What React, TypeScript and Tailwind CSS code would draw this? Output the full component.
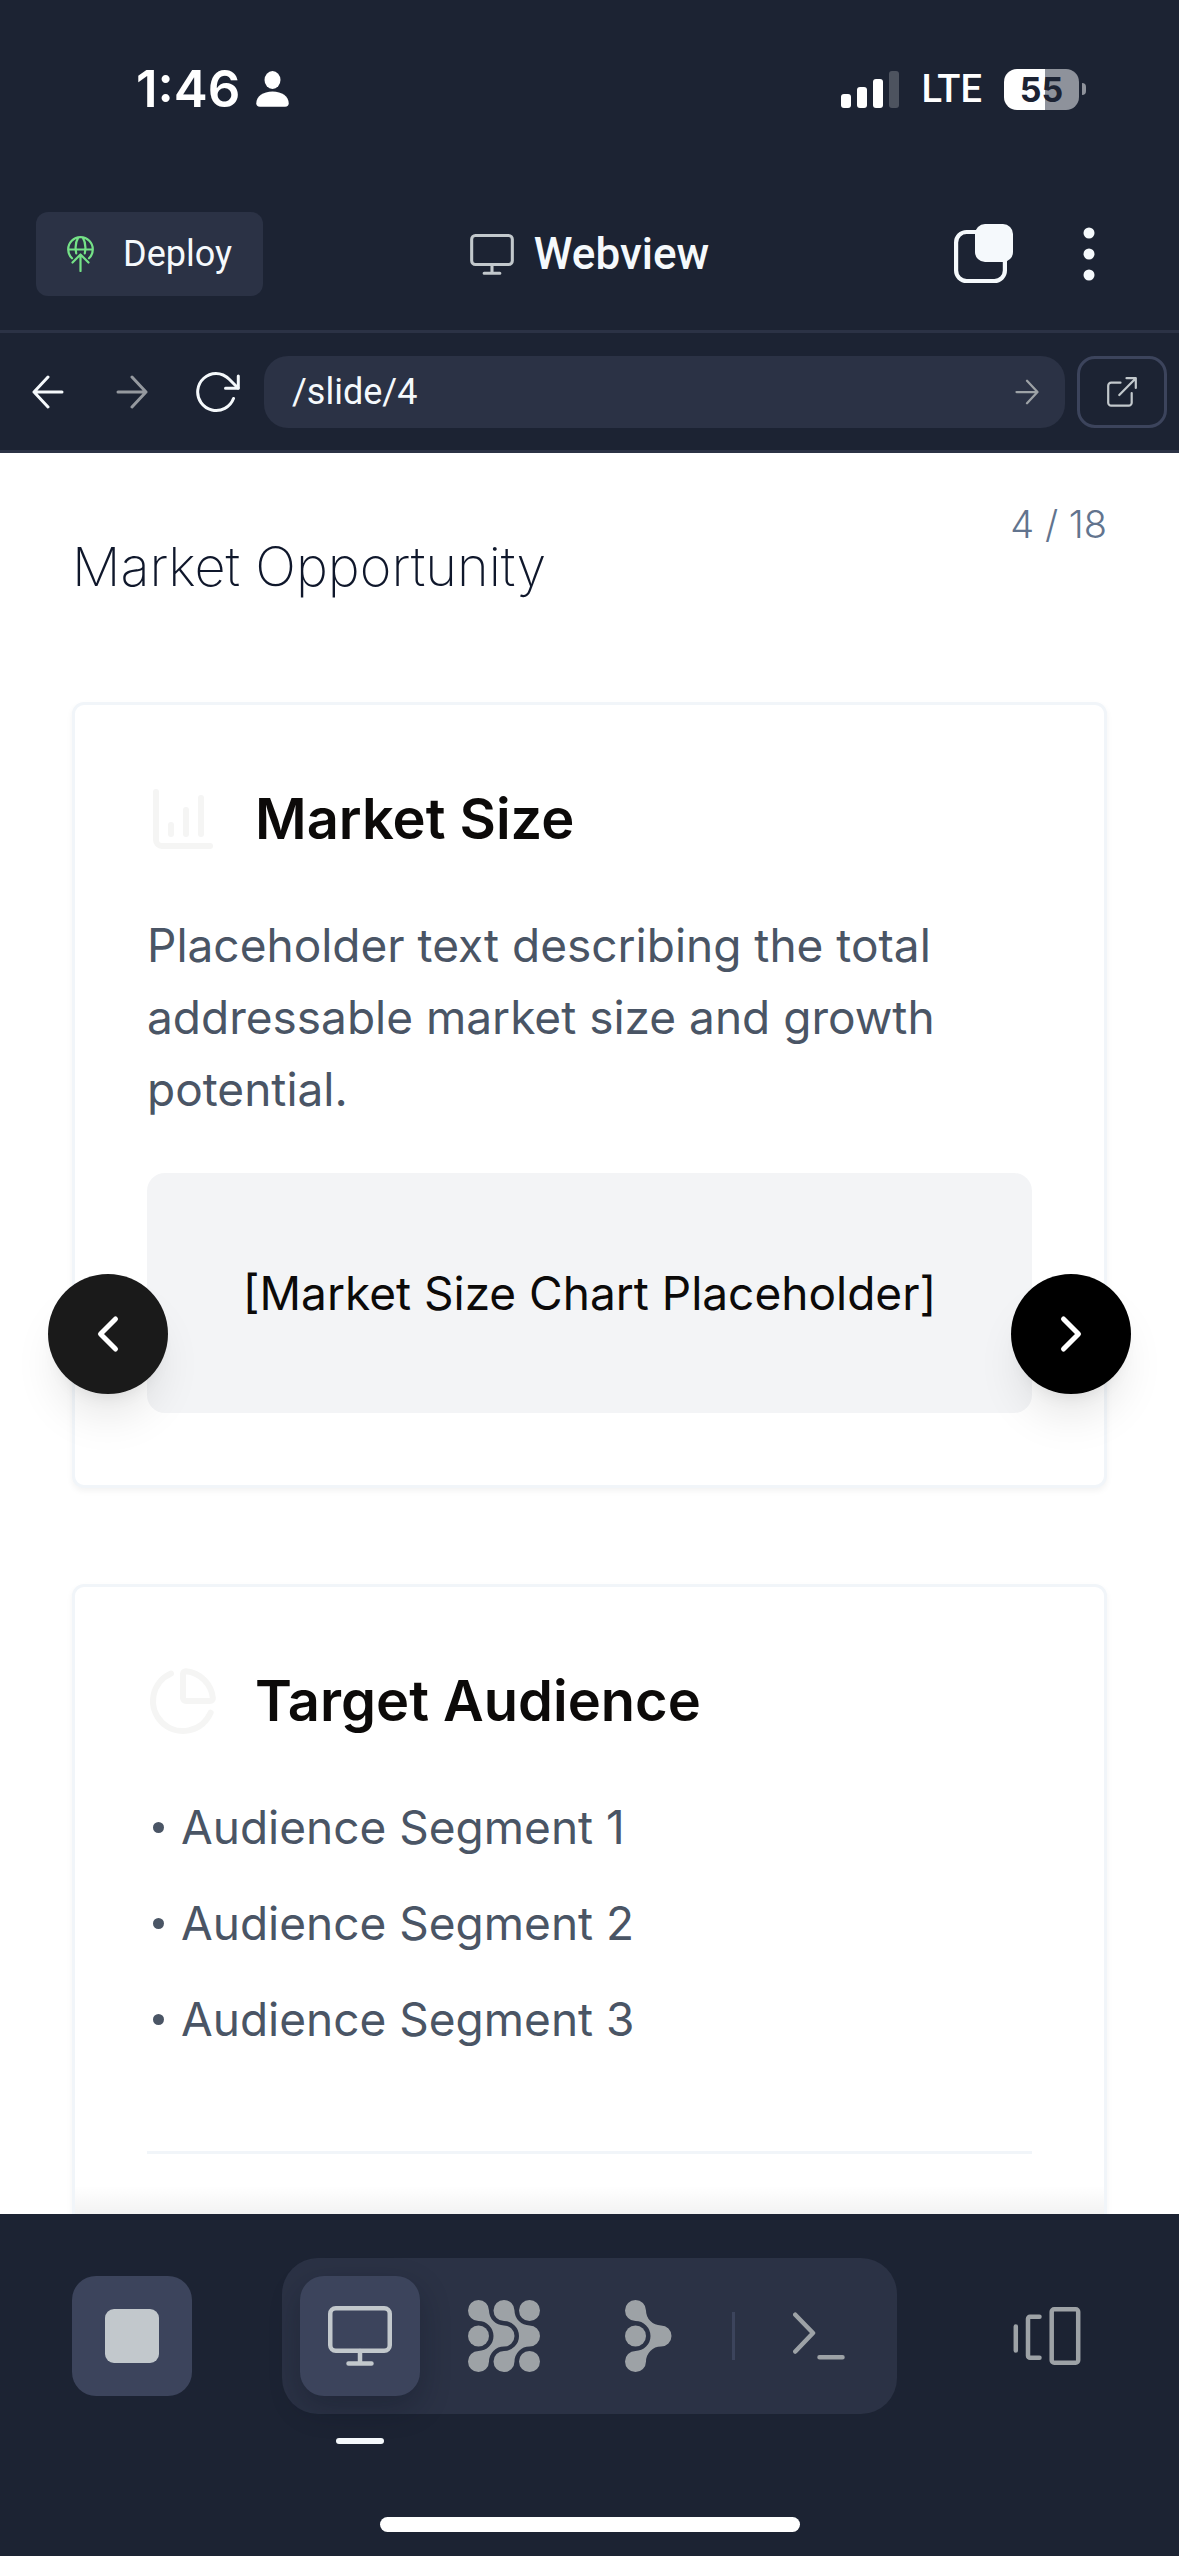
import React from "react";
import { ChartColumnIncreasing, ChartPie, ChevronLeft, ChevronRight } from "lucide-react";

const SEGMENTS = ["Audience Segment 1", "Audience Segment 2", "Audience Segment 3"];

const BRANCH =
  "M10.5 0A10.5 10.5 0 0 1 21 10.5A15 15 0 0 0 36 25.5A10.5 10.5 0 0 1 36 46.5A15 15 0 0 0 21 61.5A10.5 10.5 0 1 1 10.5 51A15 15 0 0 0 10.5 21A10.5 10.5 0 0 1 10.5 0Z";

type IconProps = { className?: string };

function MonitorIcon({ className }: IconProps) {
  return (
    <svg className={className} viewBox="0 0 64 60" fill="none" stroke="currentColor" strokeWidth="4.5" strokeLinecap="round" aria-hidden="true">
      <rect x="2.25" y="2.25" width="59.5" height="42.5" rx="5.5" />
      <path d="M32 45v12M20.5 57.5h23" />
    </svg>
  );
}

function ArrowIcon({ className }: IconProps) {
  return (
    <svg className={className} viewBox="0 0 32 34" fill="none" stroke="currentColor" strokeWidth="3" strokeLinecap="round" strokeLinejoin="round" aria-hidden="true">
      <path d="M2 17h28M16 2l14 15-14 15" />
    </svg>
  );
}

function StatusBar() {
  return (
    <div className="flex h-[178px] items-center justify-between pr-[93px] pl-[136px] text-white">
      <div className="flex items-center gap-4">
        <span className="text-[51px] leading-[60px] font-semibold">1:46</span>
        <svg className="h-9 w-[33px]" viewBox="0 0 33 36" fill="currentColor" aria-hidden="true">
          <ellipse cx="16.5" cy="9" rx="8" ry="9" />
          <path d="M4 35.7C1.4 35.7.3 34.5.3 32.3.3 25.5 7 20.5 16.5 20.5S32.7 25.5 32.7 32.3c0 2.2-1.1 3.4-3.7 3.4Z" />
        </svg>
      </div>
      <div className="flex items-center">
        <svg className="h-[37px] w-[58px]" viewBox="0 0 58 37" fill="currentColor" aria-hidden="true">
          <rect x="0" y="23" width="10" height="14" rx="3" />
          <rect x="16" y="16" width="10" height="21" rx="3" />
          <rect x="32" y="8" width="10" height="29" rx="3" />
          <rect x="48" y="0" width="10" height="37" rx="3" opacity="0.22" />
        </svg>
        <span className="ml-[22px] font-[Roboto] text-[38px] leading-[48px] font-medium">LTE</span>
        <div className="ml-[22px] flex items-center gap-[3px]">
          <div className="flex h-[41px] w-[75px] items-center justify-center rounded-[13px] bg-linear-to-r from-white from-55% to-[#8e929b] to-55% text-[34px] font-bold text-[#1C2333]">
            55
          </div>
          <div className="h-3 w-1 rounded-r-full bg-[#8e929b]" />
        </div>
      </div>
    </div>
  );
}

function AppHeader() {
  return (
    <header className="grid h-[155px] grid-cols-[1fr_auto_1fr] items-center border-b-[3px] border-[#2B3245] px-9 font-[Roboto] text-[#F5F9FC]">
      <button className="flex h-21 w-[227px] items-center rounded-xl bg-[#2B3245] pl-[31px] text-4xl">
        <svg className="mr-[29px] h-9 w-[27px] text-[#75E287]" viewBox="0 0 27 36" fill="none" stroke="currentColor" strokeWidth="2.2" strokeLinecap="round" strokeLinejoin="round" aria-hidden="true">
          <path d="M5 22.3A12.3 12.3 0 1 1 22 22.3M1.2 13.5h24.6M11.3 1.4C8.8 5.5 8 11.5 9.2 17.3M15.7 1.4C18.2 5.5 19 11.5 17.8 17.3" />
          <path d="M13.5 35V18.5M5.5 26.5l8-8 8 8" />
        </svg>
        Deploy
      </button>
      <div className="flex items-center gap-5">
        <MonitorIcon className="h-[41px] w-11 text-[#C2C8CC]" />
        <h1 className="text-[44px] leading-[48px] font-medium">Webview</h1>
      </div>
      <div className="flex items-center justify-end gap-[45px] pr-6">
        <button aria-label="Tabs">
          <svg className="size-[60px]" viewBox="0 0 60 60" fill="none" aria-hidden="true">
            <rect x="2.1" y="8" width="48.8" height="49" rx="10.5" stroke="currentColor" strokeWidth="4.2" />
            <rect x="21" y="0" width="38" height="38" rx="10" fill="currentColor" />
          </svg>
        </button>
        <button aria-label="More" className="flex w-[60px] justify-center">
          <svg className="h-[54px] w-3" viewBox="0 0 12 54" fill="currentColor" aria-hidden="true">
            <circle cx="6" cy="6" r="5.5" />
            <circle cx="6" cy="27" r="5.5" />
            <circle cx="6" cy="48" r="5.5" />
          </svg>
        </button>
      </div>
    </header>
  );
}

function AddressBar() {
  return (
    <nav aria-label="Browser" className="flex h-[120px] items-center border-b-[3px] border-[#2B3245] pr-3 pl-[6px] text-[#F5F9FC]">
      <button aria-label="Back" className="flex h-18 w-21 items-center justify-center">
        <ArrowIcon className="h-[34px] w-8 rotate-180" />
      </button>
      <button aria-label="Forward" className="flex h-18 w-21 items-center justify-center text-[#95999F]">
        <ArrowIcon className="h-[34px] w-8" />
      </button>
      <button aria-label="Reload" className="flex h-18 w-21 items-center justify-center">
        <svg className="size-12" viewBox="0 0 48 48" fill="none" stroke="currentColor" strokeWidth="3" strokeLinecap="round" strokeLinejoin="round" aria-hidden="true">
          <path d="M41.5 30.5A18.5 18.5 0 1 1 24 5.5C30 5.5 34 8 37.5 11.5L46 20" />
          <path d="M46.3 8v12.3H33.5" />
        </svg>
      </button>
      <div className="ml-[6px] flex h-18 min-w-0 flex-1 items-center rounded-3xl bg-[#2B3245] pr-[26px] pl-7">
        <input aria-label="Page path" defaultValue="/slide/4" className="min-w-0 flex-1 bg-transparent font-[Roboto] text-4xl outline-none" />
        <button aria-label="Go" className="text-[#9DA2A6]">
          <ArrowIcon className="h-[26px] w-6" />
        </button>
      </div>
      <a href="/slide/4" aria-label="Open in new tab" className="ml-3 flex h-18 w-[90px] items-center justify-center rounded-[18px] border-[3px] border-[#3C445C] text-[#C2C8CC]">
        <svg className="size-[30px]" viewBox="0 0 30 30" fill="none" stroke="currentColor" strokeWidth="2.2" strokeLinecap="round" strokeLinejoin="round" aria-hidden="true">
          <path d="M13.5 5.7H4.2a3 3 0 0 0-3 3v17a3 3 0 0 0 3 3h17.5a3 3 0 0 0 3-3V16" />
          <path d="M19.5 1.2h9.3v9.8M28.8 1.2 12.3 18" />
        </svg>
      </a>
    </nav>
  );
}

function Card({ icon, title, children }: { icon: React.ReactNode; title: string; children: React.ReactNode }) {
  return (
    <article className="shrink-0 rounded-xl border-[3px] border-slate-100 bg-white p-18 shadow-[0_3px_6px_rgba(0,0,0,0.05)]">
      <div className="mb-12 flex h-21 items-center gap-9">
        {icon}
        <h3 className="text-[56px] leading-[84px] font-semibold text-stone-950">{title}</h3>
      </div>
      {children}
    </article>
  );
}

function Slide() {
  return (
    <main className="relative flex min-h-0 flex-1 flex-col overflow-hidden bg-white px-18 pt-[72px]">
      <p className="absolute top-[44px] right-18 text-[38px] leading-[54px] font-light text-slate-500">4 / 18</p>
      <h2 className="mb-[93px] shrink-0 text-[54px] leading-[84px] font-extralight text-slate-900">Market Opportunity</h2>
      <div className="flex flex-col gap-24">
        <Card title="Market Size" icon={<ChartColumnIncreasing className="size-18 text-stone-100" />}>
          <p className="mb-12 text-[46px] leading-[72px] text-gray-600">
            Placeholder text describing the total addressable market size and growth potential.
          </p>
          <div className="flex h-60 items-center justify-center rounded-[18px] bg-gray-100 text-[46px] text-stone-950">
            [Market Size Chart Placeholder]
          </div>
        </Card>
        <Card title="Target Audience" icon={<ChartPie className="size-18 text-stone-100" />}>
          <ul className="flex flex-col gap-6 text-[46px] leading-[72px] text-gray-600">
            {SEGMENTS.map((segment) => (
              <li key={segment} className="flex items-center pl-[6px]">
                <span className="mr-[17px] size-[11px] rounded-full bg-gray-600" />
                {segment}
              </li>
            ))}
          </ul>
          <hr className="mt-24 h-18 border-t-[3px] border-slate-100" />
        </Card>
      </div>
      <div className="absolute inset-x-[75px] bottom-0 h-7 bg-linear-to-b from-transparent to-black/5" />
      <button aria-label="Previous slide" className="absolute top-1/2 left-12 flex size-30 -translate-y-1/2 items-center justify-center rounded-full bg-[#1a1a1a] text-white shadow-[0_30px_45px_-9px_rgba(0,0,0,0.1),0_12px_18px_-12px_rgba(0,0,0,0.1)]">
        <ChevronLeft className="size-15" />
      </button>
      <button aria-label="Next slide" className="absolute top-1/2 right-12 flex size-30 -translate-y-1/2 items-center justify-center rounded-full bg-black text-white shadow-[0_30px_45px_-9px_rgba(0,0,0,0.1),0_12px_18px_-12px_rgba(0,0,0,0.1)]">
        <ChevronRight className="size-15" />
      </button>
    </main>
  );
}

function Dock() {
  return (
    <footer className="flex h-[342px] shrink-0 flex-col px-18 pt-11 text-[#9DA2A6]">
      <div className="flex items-center justify-between">
        <button aria-label="Stop" className="flex size-30 items-center justify-center rounded-3xl bg-[#3C445C]">
          <span className="size-[54px] rounded-[9px] bg-[#C2C8CC]" />
        </button>
        <div className="flex h-39 items-center gap-6 rounded-[36px] bg-[#2B3245] px-[18px]">
          <button aria-label="Webview" className="relative flex size-30 items-center justify-center rounded-3xl bg-[#3C445C] text-[#C2C8CC] shadow-[0_12px_30px_rgba(10,15,30,0.3)]">
            <MonitorIcon className="h-15 w-16" />
            <span className="absolute top-[162px] left-9 h-[6px] w-12 rounded-full bg-[#F5F9FC]" />
          </button>
          <button aria-label="Tools" className="flex size-30 items-center justify-center">
            <svg className="size-18" viewBox="0 0 72 72" fill="currentColor" aria-hidden="true">
              <path d={BRANCH} />
              <path d={BRANCH} transform="translate(25.5 0)" />
              <circle cx="10.5" cy="36" r="10.5" />
              <circle cx="61.5" cy="10.5" r="10.5" />
              <circle cx="61.5" cy="61.5" r="10.5" />
            </svg>
          </button>
          <button aria-label="Assistant" className="flex size-30 items-center justify-center">
            <svg className="h-18 w-[47px]" viewBox="0 0 47 72" fill="currentColor" aria-hidden="true">
              <path d={BRANCH} />
              <circle cx="10.5" cy="36" r="10.5" />
            </svg>
          </button>
          <span className="h-12 w-[3px] bg-[#3C445C]" />
          <button aria-label="Shell" className="flex size-30 items-center justify-center">
            <svg className="h-12 w-[52px]" viewBox="0 0 52 48" fill="none" stroke="currentColor" strokeWidth="4.5" strokeLinecap="round" strokeLinejoin="round" aria-hidden="true">
              <path d="M2.3 2.7 20 21 2.3 39.5M26.5 45.3h23" />
            </svg>
          </button>
        </div>
        <button aria-label="Switch panes" className="flex size-30 items-center justify-center">
          <svg className="h-[58px] w-[68px]" viewBox="0 0 68 58" fill="none" stroke="currentColor" strokeWidth="4.5" strokeLinecap="round" strokeLinejoin="round" aria-hidden="true">
            <path d="M2.8 19.5v24M26.5 9.7H17a2 2 0 0 0-2 2v37a2 2 0 0 0 2 2h9.5" />
            <rect x="38.7" y="2.3" width="26.5" height="53.4" rx="2.5" />
          </svg>
        </button>
      </div>
      <div className="mt-[103px] h-[15px] w-[420px] self-center rounded-full bg-white" />
    </footer>
  );
}

export default function App() {
  return (
    <div className="flex h-screen flex-col overflow-hidden bg-[#1C2333] font-[Inter,sans-serif]">
      <StatusBar />
      <AppHeader />
      <AddressBar />
      <Slide />
      <Dock />
    </div>
  );
}
